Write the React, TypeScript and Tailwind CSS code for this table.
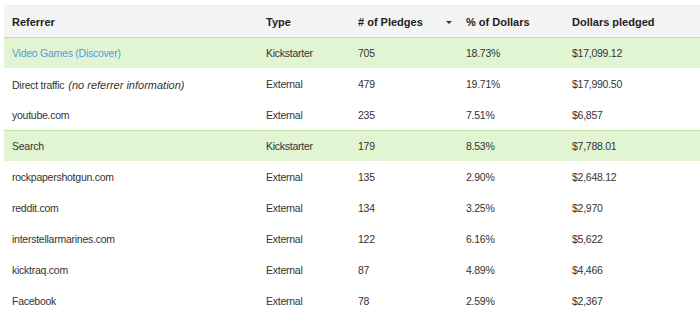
const rows = [
  { ref: "Video Games (Discover)", link: true, type: "Kickstarter", pledges: "705", pct: "18.73%", dollars: "$17,099.12", hl: true },
  { ref: "Direct traffic", note: "(no referrer information)", type: "External", pledges: "479", pct: "19.71%", dollars: "$17,990.50" },
  { ref: "youtube.com", type: "External", pledges: "235", pct: "7.51%", dollars: "$6,857" },
  { ref: "Search", type: "Kickstarter", pledges: "179", pct: "8.53%", dollars: "$7,788.01", hl: true },
  { ref: "rockpapershotgun.com", type: "External", pledges: "135", pct: "2.90%", dollars: "$2,648.12" },
  { ref: "reddit.com", type: "External", pledges: "134", pct: "3.25%", dollars: "$2,970" },
  { ref: "interstellarmarines.com", type: "External", pledges: "122", pct: "6.16%", dollars: "$5,622" },
  { ref: "kicktraq.com", type: "External", pledges: "87", pct: "4.89%", dollars: "$4,466" },
  { ref: "Facebook", type: "External", pledges: "78", pct: "2.59%", dollars: "$2,367" },
];

export default function App() {
  return (
    <div className="w-[700px] h-[313px] bg-white pl-1 pt-[5px] overflow-hidden text-[#333] [font-family:'Liberation_Sans',Arial,sans-serif]">
      {/* Header */}
      <div className="flex h-8 items-center pt-px bg-[#f4f4f4] border-t border-[#ececec] text-[11px] font-bold text-[#222]">
        <div className="w-[254px] pl-2">Referrer</div>
        <div className="w-[92px] pl-2">Type</div>
        <div className="w-[108px] pl-2 flex items-center justify-between pr-[6px]">
          # of Pledges
          <span className="w-0 h-0 border-x-[3px] border-x-transparent border-t-[3px] border-t-[#333]" />
        </div>
        <div className="w-[106px] pl-2">% of Dollars</div>
        <div className="flex-1 pl-2">Dollars pledged</div>
      </div>

      {/* Rows */}
      {rows.map((r) => (
        <div
          key={r.ref}
          className={`flex h-[31px] items-center pt-[2px] border-t text-[10.5px] tracking-[-0.25px] ${
            r.hl ? "bg-[#e1f5d2] border-[#bfe3a2]" : "bg-white border-transparent"
          }`}
        >
          <div className={`w-[254px] pl-2 ${r.link ? "text-[#4d9ee0]" : ""}`}>
            {r.ref}
            {r.note && <i className="ml-1 text-[11px] tracking-normal">{r.note}</i>}
          </div>
          <div className="w-[92px] pl-2">{r.type}</div>
          <div className="w-[108px] pl-2">{r.pledges}</div>
          <div className="w-[106px] pl-2">{r.pct}</div>
          <div className="flex-1 pl-2">{r.dollars}</div>
        </div>
      ))}
    </div>
  );
}
